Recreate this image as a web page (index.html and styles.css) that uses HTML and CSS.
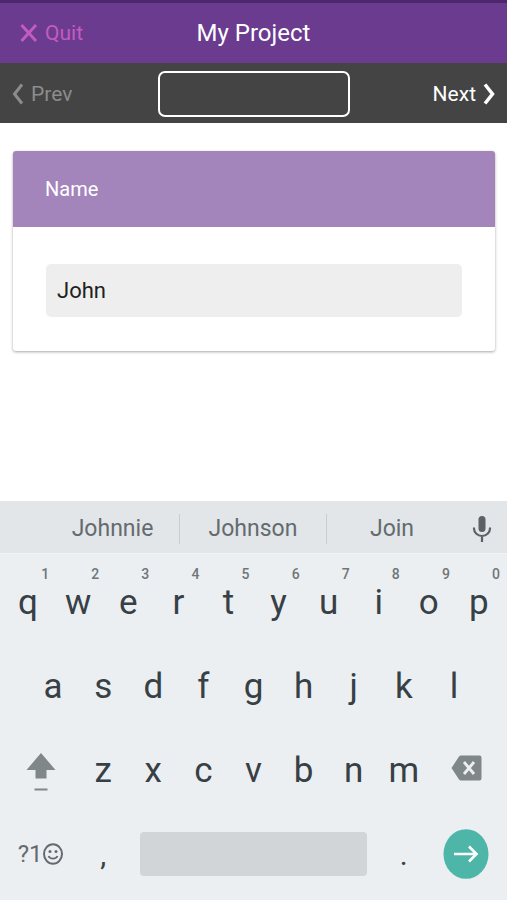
FILE: index.html
```html
<!DOCTYPE html>
<html lang="en">
<head>
<meta charset="utf-8">
<meta name="viewport" content="width=device-width, initial-scale=1">
<title>My Project</title>
<link rel="stylesheet" href="styles.css">
</head>
<body>
<header class="topbar">
  <button class="nav-btn quit" type="button">
    <svg width="18" height="20" viewBox="0 0 18 20" fill="none" stroke="currentColor" stroke-width="3"><path d="M1.500 2L16 18M16 2L1.500 18"/></svg>
    Quit
  </button>
  <h1 class="title">My Project</h1>
</header>
<nav class="pager">
  <button class="nav-btn prev" type="button" disabled>
    <svg width="12" height="22" viewBox="0 0 12 22" fill="none" stroke="currentColor" stroke-width="3"><path d="M10 1.500L2.500 11L10 20.500"/></svg>
    Prev
  </button>
  <input class="page-box" type="text" aria-label="Page">
  <button class="nav-btn next" type="button">
    Next
    <svg width="12" height="22" viewBox="0 0 12 22" fill="none" stroke="currentColor" stroke-width="3.500"><path d="M2 1.500L9.500 11L2 20.500"/></svg>
  </button>
</nav>
<main class="content">
  <section class="card">
    <label class="card-head" for="name">Name</label>
    <div class="card-body"><input class="field" id="name" type="text" value="John"></div>
  </section>
</main>
<section class="keyboard" aria-label="Keyboard">
  <div class="suggestions">
    <button class="suggestion first" type="button">Johnnie</button>
    <button class="suggestion" type="button">Johnson</button>
    <button class="suggestion" type="button">Join</button>
    <button class="key" type="button" aria-label="Voice input">
      <svg width="20" height="28" viewBox="0 0 20 28"><rect x="6.500" y="1" width="7" height="16" rx="3.500" fill="#5b6164"/><path d="M2 12.500v1a8 7.500 0 0 0 16 0v-1M10 21v6" fill="none" stroke="#5b6164" stroke-width="2.200"/></svg>
    </button>
  </div>
  <div class="keys">
    <div class="row ten">
      <button class="key" type="button">q<span class="hint">1</span></button>
      <button class="key" type="button">w<span class="hint">2</span></button>
      <button class="key" type="button">e<span class="hint">3</span></button>
      <button class="key" type="button">r<span class="hint">4</span></button>
      <button class="key" type="button">t<span class="hint">5</span></button>
      <button class="key" type="button">y<span class="hint">6</span></button>
      <button class="key" type="button">u<span class="hint">7</span></button>
      <button class="key" type="button">i<span class="hint">8</span></button>
      <button class="key" type="button">o<span class="hint">9</span></button>
      <button class="key" type="button">p<span class="hint">0</span></button>
    </div>
    <div class="row nine">
      <button class="key" type="button">a</button>
      <button class="key" type="button">s</button>
      <button class="key" type="button">d</button>
      <button class="key" type="button">f</button>
      <button class="key" type="button">g</button>
      <button class="key" type="button">h</button>
      <button class="key" type="button">j</button>
      <button class="key" type="button">k</button>
      <button class="key" type="button">l</button>
    </div>
    <div class="row edged">
      <button class="key" type="button" aria-label="Shift">
        <svg width="30" height="46" viewBox="0 -4 30 46" fill="#7f8789"><path d="M15 2L29.500 19H20.500V27.500H9.500V19H.5zM8.500 37.500h13v2h-13z"/></svg>
      </button>
      <button class="key" type="button">z</button>
      <button class="key" type="button">x</button>
      <button class="key" type="button">c</button>
      <button class="key" type="button">v</button>
      <button class="key" type="button">b</button>
      <button class="key" type="button">n</button>
      <button class="key" type="button">m</button>
      <button class="key" type="button" aria-label="Backspace">
        <svg width="32" height="30" viewBox="-2 0 32 30"><path d="M9 .5H27.500a2 2 0 0 1 2 2v21a2 2 0 0 1-2 2H9a3 3 0 0 1-2-1L.5 14.500a2 2 0 0 1 0-3L7 1.500a3 3 0 0 1 2-1z" fill="#7f8789"/><path d="M12 7l10 12M22 7L12 19" stroke="#ebeff2" stroke-width="2.800"/></svg>
      </button>
    </div>
    <div class="row edged">
      <button class="key symbols" type="button" aria-label="Symbols and emoji">?1<svg width="20" height="22" viewBox="0 0 20 22"><ellipse cx="10" cy="11" rx="9" ry="9.800" fill="none" stroke="currentColor" stroke-width="2"/><circle cx="7" cy="8.500" r="1.500" fill="currentColor"/><circle cx="13" cy="8.500" r="1.500" fill="currentColor"/><path d="M5.500 13a4.800 4 0 0 0 9 0" fill="none" stroke="currentColor" stroke-width="1.800"/></svg></button>
      <button class="key mark" type="button">,</button>
      <button class="key space" type="button" aria-label="Space"></button>
      <button class="key mark" type="button">.</button>
      <button class="key" type="button" aria-label="Enter">
        <svg width="46" height="50" viewBox="0 0 46 50"><ellipse cx="23" cy="25" rx="22.500" ry="24.800" fill="#4db6a8"/><path d="M11 25H33M26 17.500L33.500 25L26 32.500" fill="none" stroke="#fff" stroke-width="2.600"/></svg>
      </button>
    </div>
  </div>
</section>
</body>
</html>
```

FILE: styles.css
```css
* {
  box-sizing: border-box;
}

body {
  margin: 0;
  min-height: 100vh;
  display: flex;
  flex-direction: column;
  background: #fff;
  font-family: Roboto, "Liberation Sans", sans-serif;
}

button,
input {
  margin: 0;
  padding: 0;
  border: 0;
  background: none;
  color: inherit;
  font: inherit;
}

svg {
  flex: none;
}

.topbar,
.pager {
  display: grid;
  grid-template-columns: 1fr 192px 1fr;
  align-items: center;
  padding: 0 12px;
  color: #fff;
}

.topbar {
  height: 63px;
  padding-left: 20px;
  padding-right: 20px;
  border-top: 3px solid #4d266b;
  background: #6a3b8f;
}

.title {
  margin: 0;
  font-size: 24px;
  font-weight: 400;
  text-align: center;
}

.nav-btn {
  display: flex;
  align-items: center;
  gap: 7px;
  font-size: 21px;
}

.quit {
  color: #c45bc0;
}

.pager {
  height: 60px;
  padding-top: 1px;
  background: #444;
}

.prev {
  color: #8c8c8c;
}

.next {
  justify-self: end;
}

.page-box {
  width: 100%;
  height: 46px;
  border: 2px solid #fff;
  border-radius: 7px;
  text-align: center;
}

.content {
  flex: 1;
  padding: 28px 12px 28px 13px;
}

.card {
  border-radius: 3px;
  background: #fff;
  box-shadow: 0 1px 3px rgba(0, 0, 0, 0.35);
  overflow: hidden;
}

.card-head {
  display: flex;
  align-items: center;
  height: 76px;
  padding: 0 32px;
  background: #a385bc;
  color: #fff;
  font-size: 20px;
}

.card-body {
  padding: 37px 33px 34px;
}

.field {
  display: block;
  width: 100%;
  height: 53px;
  padding: 0 11px;
  border-radius: 5px;
  background: #eee;
  color: #212121;
  font-size: 22px;
}

.keyboard {
  background: #ebeff2;
  color: #374045;
}

.suggestions {
  display: grid;
  grid-template-columns: 180fr 147fr 130fr 50fr;
  align-items: center;
  height: 53px;
  padding-top: 3px;
  border-bottom: 1px solid #f1f4f6;
  background: #e2e6e9;
}

.suggestion {
  height: 30px;
  border-right: 1px solid #c8cdd0;
  color: #646b6f;
  font-size: 23px;
}

.suggestion.first {
  padding-left: 46px;
}

.suggestion:nth-child(3) {
  border-right: 0;
}

.keys {
  padding: 6px 3px 4px;
}

.row {
  display: grid;
  height: 84px;
}

.ten {
  grid-template-columns: repeat(10, 1fr);
}

.nine {
  grid-template-columns: repeat(9, 2fr);
  padding: 0 5%;
}

.edged {
  grid-template-columns: 3fr repeat(7, 2fr) 3fr;
}

.key {
  position: relative;
  display: flex;
  align-items: center;
  justify-content: center;
  font-size: 35px;
}

.hint {
  position: absolute;
  top: 6px;
  right: 4px;
  color: #6f7679;
  font-size: 14px;
  font-weight: 500;
}

.symbols {
  gap: 1px;
  color: #646b6f;
  font-size: 24px;
}

.mark {
  font-size: 30px;
}

.space {
  grid-column: span 5;
  align-self: center;
  height: 44px;
  margin: 0 12px;
  border-radius: 4px;
  background: #d1d5d8;
}
```
